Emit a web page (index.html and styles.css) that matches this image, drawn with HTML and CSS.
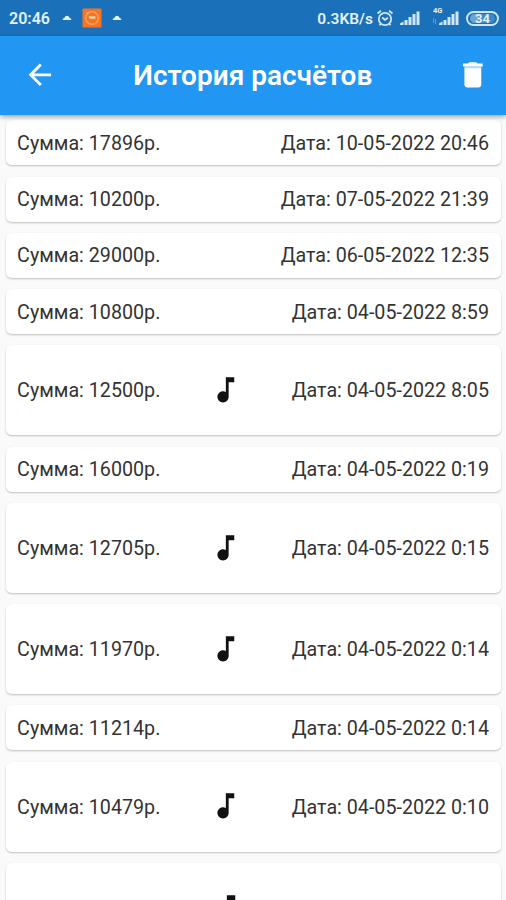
FILE: index.html
```html
<!DOCTYPE html>
<html lang="ru">
<head>
    <meta charset="UTF-8">
    <meta name="viewport" content="width=device-width, initial-scale=1.0">
    <title>История расчётов</title>
    <link rel="stylesheet" href="styles.css">
</head>
<body>
<svg class="defs" width="0" height="0">
    <symbol id="note" viewBox="0 0 24 24">
        <path d="M12 3v10.550c-.59-.34-1.270-.55-2-.55-2.210 0-4 1.790-4 4s1.790 4 4 4 4-1.790 4-4V6.600h4V3h-6z"/>
    </symbol>
</svg>

<div class="status-bar">
    <span class="clock">20:46</span>
    <svg class="cloud" width="10" height="6" viewBox="0 0 10 6"><path d="M0.5 5Q1 3 2.5 2.8Q3.2 0.8 5 0.8Q6.8 0.8 7.5 2.8Q9 3 9.500 5z"/></svg>
    <svg class="app-icon" width="20" height="20" viewBox="0 0 20 20">
        <rect class="app-bg" x="0.500" y="0.500" width="19" height="19" rx="1"/>
        <circle class="app-ring" cx="10" cy="10" r="6.300"/>
        <path class="app-line" d="M7 8.500h6v2h-5zM4.500 4.500l2 1.500"/>
    </svg>
    <svg class="cloud" width="10" height="6" viewBox="0 0 10 6"><path d="M0.5 5Q1 3 2.5 2.8Q3.2 0.8 5 0.8Q6.8 0.8 7.5 2.8Q9 3 9.500 5z"/></svg>
    <div class="status-right">
        <span class="speed">0.3KB/s</span>
        <svg class="alarm" width="18" height="18" viewBox="0 0 18 18">
            <circle cx="9" cy="10" r="6.200"/>
            <path d="M1.500 4.500L5 1.700M16.500 4.500L13 1.700M6.200 8.500L9 10.800L12 8.800M4.800 14.700L3.500 16.300M13.200 14.700L14.500 16.300"/>
        </svg>
        <svg class="signal" width="20" height="16" viewBox="0 0 20 16">
            <path d="M0 15v-1.500l3.500-2v3.500zM4.500 15v-5h3v5zM8.500 15v-8h3v8zM12.500 15v-11h3v11zM16.500 15v-13.500h3v13.500z"/>
        </svg>
        <div class="mobile">
            <span class="net">4G</span>
            <svg class="signal" width="20" height="16" viewBox="0 0 20 16">
                <path d="M0 15v-1.500l3.500-2v3.500zM4.500 15v-5h3v5zM8.500 15v-8h3v8zM12.500 15v-11h3v11zM16.500 15v-13.500h3v13.500z"/>
            </svg>
            <svg class="arrows" width="5" height="6" viewBox="0 0 5 6"><path d="M1.500 0v5M3.500 1v5"/></svg>
        </div>
        <span class="battery"><span class="battery-level"></span><span class="battery-text">34</span></span>
    </div>
</div>

<div class="app-bar">
    <svg class="icon" viewBox="0 0 24 24"><path d="M20 11H7.830l5.590-5.590L12 4l-8 8 8 8 1.410-1.410L7.830 13H20v-2z"/></svg>
    <h1>История расчётов</h1>
    <svg class="icon" viewBox="0 0 24 24"><path d="M6 19c0 1.100.900 2 2 2h8c1.100 0 2-.900 2-2V7H6v12z"/><path class="lid" d="M6 6h12v1.300H6z"/><path d="M19 4h-3.500l-1-1h-5l-1 1H5v2h14V4z"/></svg>
</div>

<div class="list">
    <div class="card">
        <span>Сумма: 17896р.</span>
        <span>Дата: 10-05-2022 20:46</span>
    </div>
    <div class="card">
        <span>Сумма: 10200р.</span>
        <span>Дата: 07-05-2022 21:39</span>
    </div>
    <div class="card">
        <span>Сумма: 29000р.</span>
        <span>Дата: 06-05-2022 12:35</span>
    </div>
    <div class="card">
        <span>Сумма: 10800р.</span>
        <span>Дата: 04-05-2022 8:59</span>
    </div>
    <div class="card card-big">
        <span>Сумма: 12500р.</span>
        <svg class="icon"><use href="#note"/></svg>
        <span>Дата: 04-05-2022 8:05</span>
    </div>
    <div class="card">
        <span>Сумма: 16000р.</span>
        <span>Дата: 04-05-2022 0:19</span>
    </div>
    <div class="card card-big">
        <span>Сумма: 12705р.</span>
        <svg class="icon"><use href="#note"/></svg>
        <span>Дата: 04-05-2022 0:15</span>
    </div>
    <div class="card card-big">
        <span>Сумма: 11970р.</span>
        <svg class="icon"><use href="#note"/></svg>
        <span>Дата: 04-05-2022 0:14</span>
    </div>
    <div class="card">
        <span>Сумма: 11214р.</span>
        <span>Дата: 04-05-2022 0:14</span>
    </div>
    <div class="card card-big">
        <span>Сумма: 10479р.</span>
        <svg class="icon"><use href="#note"/></svg>
        <span>Дата: 04-05-2022 0:10</span>
    </div>
    <!-- last card goes under the bottom edge of the screen -->
    <div class="card card-big card-last">
        <svg class="icon"><use href="#note"/></svg>
    </div>
</div>
</body>
</html>
```
FILE: styles.css
```css
html, body {
    margin: 0;
    padding: 0;
    height: 100%;
}
body {
    display: flex;
    flex-direction: column;
    overflow: hidden;
    background: #fafafa;
    font-family: Roboto, "Noto Sans", sans-serif;
    color: #333;
}
.defs {
    position: absolute;
}
.status-bar {
    flex: none;
    display: flex;
    align-items: center;
    height: 36px;
    padding: 0 7px 0 9px;
    box-sizing: border-box;
    background: #1a70b9;
    color: #e2f2fa;
    font-size: 16px;
    font-weight: 600;
    line-height: 20px;
}
.clock {
    width: 53px;
    padding-top: 2px;
}
.cloud {
    fill: #e2f2fa;
}
.app-icon {
    margin: 0 10px;
}
.app-bg {
    fill: #f47424;
}
.app-ring {
    fill: none;
    stroke: #ffa566;
    stroke-width: 1.2;
}
.app-line {
    fill: #ffd5ad;
    stroke: #ffc08a;
}
.status-right {
    display: flex;
    align-items: center;
    margin-left: auto;
}
.speed {
    padding-top: 2px;
    margin-right: 3px;
    font-size: 15.5px;
}
.alarm {
    margin-right: 6px;
    fill: none;
    stroke: #cfe6f4;
    stroke-width: 1.8;
}
.signal {
    display: block;
    fill: #cfe6f4;
}
.mobile {
    position: relative;
    margin: 0 7px 0 19px;
}
.net {
    position: absolute;
    left: -6px;
    top: -3px;
    font-size: 7.5px;
    line-height: 8px;
    font-weight: 700;
}
.arrows {
    position: absolute;
    left: -7px;
    top: 8px;
    fill: none;
    stroke: #5a9ed4;
}
.battery {
    position: relative;
    display: flex;
    align-items: center;
    justify-content: center;
    width: 33px;
    height: 15px;
    box-sizing: border-box;
    border: 2px solid #cfe6f4;
    border-radius: 8px;
}
.battery-level {
    position: absolute;
    left: 2px;
    top: 1px;
    bottom: 1px;
    width: 25px;
    border-radius: 5px;
    background: linear-gradient(to right, #69a6d4 36%, #4088c4 36%);
}
.battery-text {
    position: relative;
    padding-top: 1px;
    font-size: 13px;
    line-height: 12px;
    font-weight: 700;
}
.app-bar {
    flex: none;
    display: flex;
    align-items: center;
    height: 78.5px;
    padding: 0 16px 0 22.5px;
    box-sizing: border-box;
    background: #2196f3;
    color: #fff;
    box-shadow: 0 2px 5px rgba(0, 0, 0, 0.35);
    z-index: 1;
}
.app-bar h1 {
    flex: 1;
    margin: 0;
    padding: 2px 7px 0 0;
    text-align: center;
    font-size: 28px;
    font-weight: 600;
    line-height: 34px;
    white-space: nowrap;
}
.icon {
    flex: none;
    width: 33.7px;
    height: 33.7px;
    fill: currentColor;
}
.lid {
    fill: #b5dbfb;
}
.list {
    flex: 1;
    min-height: 0;
    display: flex;
    flex-direction: column;
    gap: 11.25px;
    padding: 5.9px 5px 0 6.2px;
    overflow: hidden;
}
.card {
    flex: none;
    display: flex;
    align-items: center;
    justify-content: space-between;
    height: 45px;
    padding: 1px 12px 0 10.9px;
    box-sizing: border-box;
    background: #fff;
    border-radius: 5.6px;
    box-shadow: 0 1px 2px rgba(0, 0, 0, 0.24);
    font-size: 19.7px;
}
.card-big {
    height: 90px;
}
.card .icon {
    margin-bottom: 2px;
    color: #111;
}
.card-last {
    padding-left: 203.4px;
}
```
